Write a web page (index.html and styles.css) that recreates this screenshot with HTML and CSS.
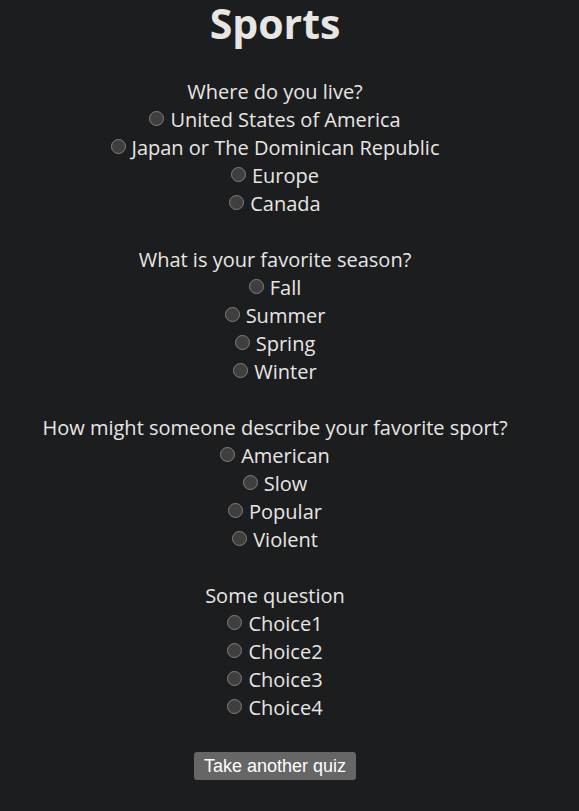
FILE: index.html
```html
<!DOCTYPE html>
<html>
<head>
<meta charset="utf-8">
<link rel="stylesheet" href="styles.css">
</head>
<body>
<main class="page">
<h1 class="title">Sports</h1>
<form class="quiz">
  <div class="question">
    <div class="line">Where do you live?</div>
    <label class="line"><input type="radio" name="q1" class="radio">United States of America</label>
    <label class="line"><input type="radio" name="q1" class="radio">Japan or The Dominican Republic</label>
    <label class="line"><input type="radio" name="q1" class="radio">Europe</label>
    <label class="line"><input type="radio" name="q1" class="radio">Canada</label>
  </div>
  <div class="question">
    <div class="line">What is your favorite season?</div>
    <label class="line"><input type="radio" name="q2" class="radio">Fall</label>
    <label class="line"><input type="radio" name="q2" class="radio">Summer</label>
    <label class="line"><input type="radio" name="q2" class="radio">Spring</label>
    <label class="line"><input type="radio" name="q2" class="radio">Winter</label>
  </div>
  <div class="question">
    <div class="line">How might someone describe your favorite sport?</div>
    <label class="line"><input type="radio" name="q3" class="radio">American</label>
    <label class="line"><input type="radio" name="q3" class="radio">Slow</label>
    <label class="line"><input type="radio" name="q3" class="radio">Popular</label>
    <label class="line"><input type="radio" name="q3" class="radio">Violent</label>
  </div>
  <div class="question">
    <div class="line">Some question</div>
    <label class="line"><input type="radio" name="q4" class="radio">Choice1</label>
    <label class="line"><input type="radio" name="q4" class="radio">Choice2</label>
    <label class="line"><input type="radio" name="q4" class="radio">Choice3</label>
    <label class="line"><input type="radio" name="q4" class="radio">Choice4</label>
  </div>
  <div class="actions">
    <button type="button" class="btn">Take another quiz</button>
  </div>
</form>
</main>
</body>
</html>
```
FILE: styles.css
```css
html, body {
  margin: 0;
  padding: 0;
  background: #1c1d1f;
}
body {
  color: #e8e6e3;
  font-family: "Open Sans", "Noto Sans", sans-serif;
  font-size: 20px;
}
.page {
  width: 550px;
  text-align: center;
}
.title {
  margin: 0;
  height: 78px;
  font-size: 41px;
  line-height: 46px;
  font-weight: 700;
}
.question {
  margin-bottom: 28px;
}
.line {
  display: block;
  line-height: 28px;
  height: 28px;
}
.radio {
  appearance: none;
  -webkit-appearance: none;
  width: 15px;
  height: 15px;
  margin: 0 6px 0 0;
  border: 1px solid #808080;
  border-radius: 50%;
  background: #3f3f3f;
  vertical-align: 1px;
  box-sizing: border-box;
}
.actions {
  padding-top: 1px;
}
.btn {
  font-family: "Liberation Sans", Arial, sans-serif;
  font-size: 18px;
  color: #ffffff;
  background: #666666;
  border: none;
  border-radius: 3px;
  height: 28px;
  padding: 0 10px;
  line-height: 28px;
}
```
